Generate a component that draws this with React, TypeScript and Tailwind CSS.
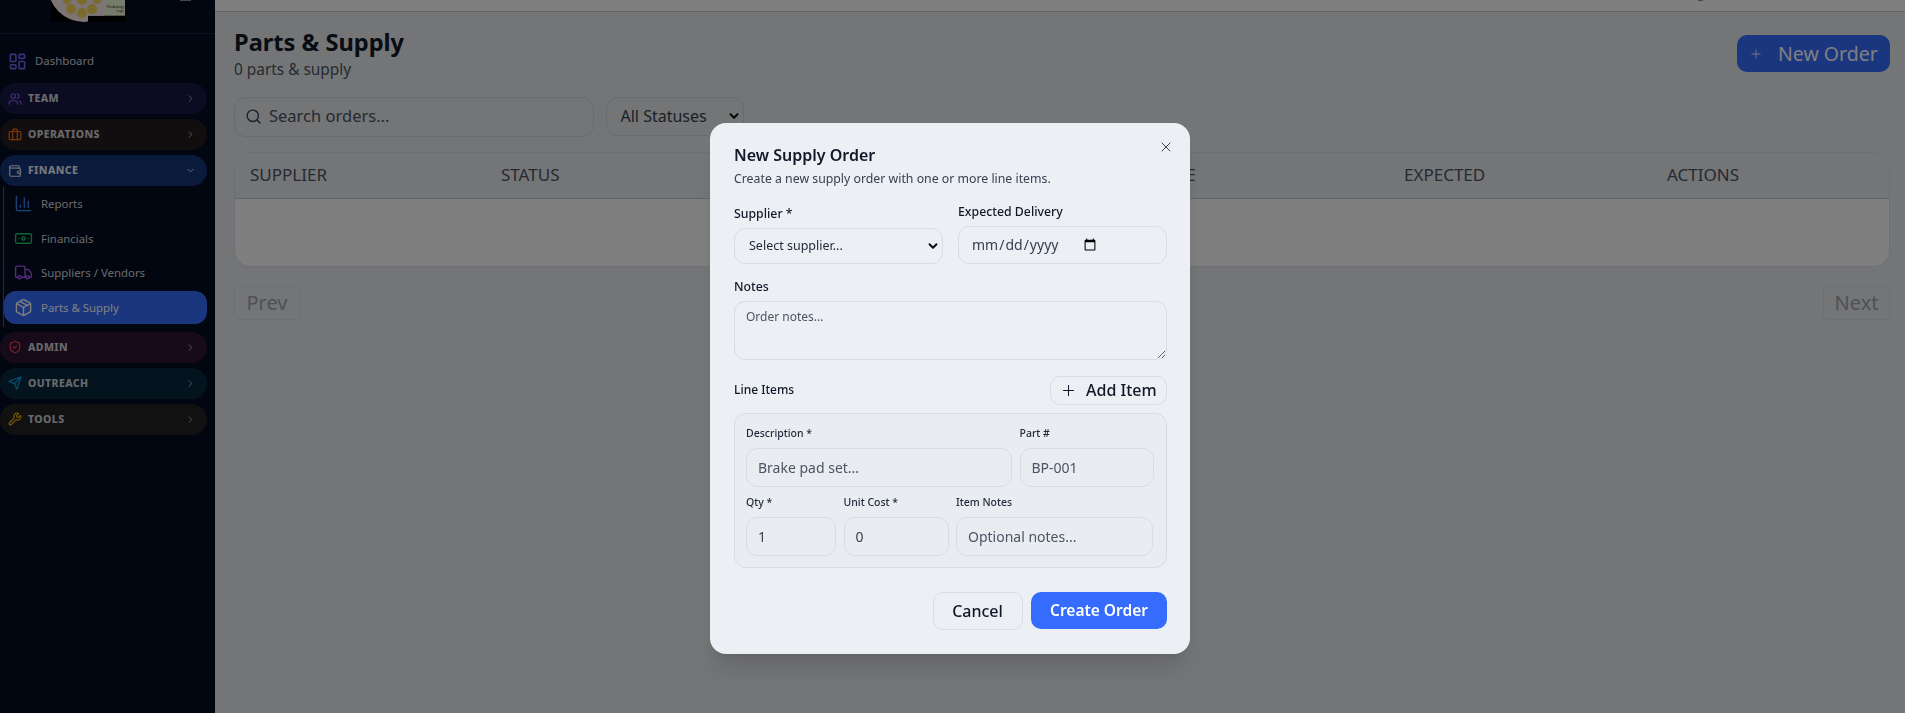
import {
  Banknote,
  Briefcase,
  ChartColumn,
  ChevronDown,
  ChevronRight,
  LayoutDashboard,
  Package,
  Plus,
  Search,
  Send,
  ShieldCheck,
  Truck,
  Users,
  Wallet,
  Wrench,
  X,
} from 'lucide-react'
import type { LucideIcon } from 'lucide-react'

const font = "font-['Noto_Sans',sans-serif]"

interface GroupProps {
  label: string
  icon: LucideIcon
  pill: string
  iconColor: string
  open?: boolean
}

function Group({ label, icon: Icon, pill, iconColor, open }: GroupProps) {
  return (
    <div className={`flex h-[31px] w-[207px] items-center rounded-full pl-[8px] pr-[11px] ${pill}`}>
      <Icon className={`h-[14px] w-[14px] shrink-0 ${iconColor}`} strokeWidth={2} />
      <span className={`ml-[6px] flex-1 text-[10.5px] font-extrabold tracking-[0.4px] ${open ? 'text-[#e8ecf3]' : 'text-[#cfd2d8]'}`}>
        {label}
      </span>
      {open ? (
        <ChevronDown className="h-[11px] w-[11px] text-[#d4d4d8]" />
      ) : (
        <ChevronRight className="h-[11px] w-[11px] text-[#b6b8bc]" />
      )}
    </div>
  )
}

function SubItem({ label, icon: Icon, iconColor, active }: { label: string; icon: LucideIcon; iconColor: string; active?: boolean }) {
  return (
    <div className={`flex h-[33px] w-[203px] items-center gap-[8px] rounded-[12px] pl-[10px] ${active ? 'bg-[#356cfe]' : ''}`}>
      <Icon className={`h-[19px] w-[19px] shrink-0 ${iconColor}`} strokeWidth={1.75} />
      <span className={`text-[11.4px] ${active ? 'text-white' : 'text-[#d4d4d8]'}`}>{label}</span>
    </div>
  )
}

function Logo() {
  return (
    <svg className="absolute left-[51px] top-0" width="74" height="22" viewBox="0 0 74 22">
      <rect width="74" height="22" fill="#000" />
      <circle cx="33" cy="-14" r="36" fill="#faeaeb" />
      <rect x="37" y="15.7" width="37" height="7" fill="#000" />
      <rect x="37" y="0" width="15" height="15.7" fill="#faeaeb" />
      <rect x="52" y="0" width="22" height="15.7" fill="#eef7dc" />
      <circle cx="20" cy="9" r="5" fill="#f4d458" />
      <circle cx="31" cy="13" r="5" fill="#f4d458" />
      <circle cx="41" cy="9" r="5" fill="#f4d458" />
      <circle cx="31" cy="0" r="5" fill="#f4d458" />
      <circle cx="16" cy="0" r="4" fill="#f4d458" />
      <circle cx="46" cy="0" r="4" fill="#f4d458" />
      <text x="73" y="8" textAnchor="end" fontSize="3" fill="#222">The Analogy</text>
      <text x="73" y="12" textAnchor="end" fontSize="3" fill="#222">Logic</text>
    </svg>
  )
}

function Sidebar() {
  return (
    <aside className="relative h-full w-[215px] shrink-0 bg-[#040c22]">
      <Logo />
      <div className="absolute left-[180px] top-0 h-[1px] w-[11px] bg-[#8a8f99]" />
      <div className="h-[34px] border-b border-[#16223a]" />
      <div className="mt-[15px] flex h-[24px] items-center pl-[8px]">
        <LayoutDashboard className="h-[19px] w-[19px] text-[#6a6cf5]" strokeWidth={2} />
        <span className="ml-[8px] text-[11.4px] text-[#d4d4d8]">Dashboard</span>
      </div>
      <div className="mt-[10px] flex flex-col gap-[5px]">
        <Group label="TEAM" icon={Users} pill="bg-[#161644]" iconColor="text-[#8b5cf6]" />
        <Group label="OPERATIONS" icon={Briefcase} pill="bg-[#241c1e]" iconColor="text-[#f97316]" />
        <Group label="FINANCE" icon={Wallet} pill="bg-[#14347a]" iconColor="text-[#e5e7eb]" open />
        <div className="-mt-[4px] ml-[3px] flex flex-col gap-[1.67px] border-l border-[#147460] pb-[3px]">
          <SubItem label="Reports" icon={ChartColumn} iconColor="text-[#3b82f6]" />
          <SubItem label="Financials" icon={Banknote} iconColor="text-[#22c55e]" />
          <SubItem label="Suppliers / Vendors" icon={Truck} iconColor="text-[#a855f7]" />
          <SubItem label="Parts & Supply" icon={Package} iconColor="text-white" active />
        </div>
        <Group label="ADMIN" icon={ShieldCheck} pill="bg-[#2e1433]" iconColor="text-[#f43f5e]" />
        <Group label="OUTREACH" icon={Send} pill="bg-[#06283e]" iconColor="text-[#0ea5e9]" />
        <Group label="TOOLS" icon={Wrench} pill="bg-[#222224]" iconColor="text-[#eab308]" />
      </div>
    </aside>
  )
}

// the two middle headers sit behind the modal in the picture, so they stay blank
const columns = ['SUPPLIER', 'STATUS', '', '', 'DATE', 'EXPECTED', 'ACTIONS']

function OrdersPage() {
  return (
    <main className="h-full flex-1 bg-[#e8eaed]">
      <div className="relative h-[12px] overflow-hidden border-b border-[#c4c8ce] bg-white">
        <div className="absolute left-[1480px] top-[-10px] h-[11px] w-[11px] rounded-full bg-[#777]" />
      </div>
      <div className="pl-[19px] pr-[15px]">
        <div className="mt-[12px] flex items-start justify-between">
          <div>
            <h1 className="text-[23.6px] font-bold leading-[36px] text-[#111827]">Parts &amp; Supply</h1>
            <p className="text-[15.4px] leading-[20px] text-[#4b5563]">0 parts &amp; supply</p>
          </div>
          <button className="mt-[11px] flex h-[37px] w-[153px] items-center gap-[15px] rounded-[10px] bg-[#356cfe] pl-[12px] text-[19.5px] text-white">
            <Plus className="h-[14px] w-[14px]" strokeWidth={1.5} />
            New Order
          </button>
        </div>
        <div className="mt-[17px] flex items-start gap-[11.5px]">
          <div className="flex h-[39.7px] w-[360px] items-center rounded-[12px] border border-[#d2d6dc] pl-[10px]">
            <Search className="h-[17px] w-[17px] text-[#374151]" strokeWidth={2} />
            <span className="ml-[7px] text-[16.5px] text-[#4b5563]">Search orders...</span>
          </div>
          <div className="relative">
            <select className="h-[38.5px] w-[138px] appearance-none rounded-[12px] border border-[#d2d6dc] pl-[14px] text-[16px] text-[#374151]">
              <option>All Statuses</option>
            </select>
            <ChevronDown className="absolute right-[3px] top-[12px] h-[14px] w-[14px] text-[#111]" strokeWidth={3.5} />
          </div>
        </div>
        <div className="mt-[15.3px] h-[115.4px] overflow-hidden rounded-[16px] border border-[#dcdfe4] bg-white">
          <div className="-ml-[1px] grid h-[46px] grid-cols-[251px_249px_208px_197px_249px_263px_1fr] items-center border-b border-[#c4c8ce] bg-[#e9ebee] pb-[2px] text-[17px] text-[#4b5563]">
            {columns.map((c, i) => (
              <span key={i} className="pl-[16px]">{c}</span>
            ))}
          </div>
        </div>
        <div className="mt-[18.5px] flex justify-between">
          <button className="h-[34px] w-[66px] rounded-[4px] border border-[#dcdfe4] text-[20px] text-[#9ca3af]">Prev</button>
          <button className="h-[34px] w-[67px] rounded-[4px] border border-[#dcdfe4] text-[20px] text-[#9ca3af]">Next</button>
        </div>
      </div>
    </main>
  )
}

function Label({ children, className = '' }: { children: React.ReactNode; className?: string }) {
  return <label className={`block text-[12.3px] font-medium leading-[18px] text-[#111827] ${className}`}>{children}</label>
}

function SmallLabel({ children }: { children: React.ReactNode }) {
  return <label className="block text-[10.5px] font-medium leading-[14px] text-[#1f2937]">{children}</label>
}

const field = 'w-full rounded-[11px] border border-[#d8dde5] bg-transparent px-[11px] text-[14px] text-[#374151] placeholder:text-[#4b5563] outline-none'

function OrderModal() {
  return (
    <div className="fixed inset-0 bg-black/50 pl-[710px] pt-[123px]">
      <div className="relative h-[531px] w-[480px] rounded-[16px] bg-[#ecEFF4] pl-[24px] pr-[23px] pt-[21px] shadow-xl">
        <button className="absolute right-[16px] top-[16px] text-[#374151]">
          <X className="h-[16px] w-[16px]" strokeWidth={1.5} />
        </button>
        <h2 className="text-[16px] font-semibold leading-[22px] text-[#111827]">New Supply Order</h2>
        <p className="mt-[5px] text-[12.3px] leading-[16px] text-[#374151]">Create a new supply order with one or more line items.</p>

        <div className="mt-[15.7px] grid grid-cols-[209px_209px] gap-[15px]">
          <div className="pt-[2px]">
            <Label>Supplier *</Label>
            <div className="relative mt-[5.7px]">
              <select className="h-[36px] w-full appearance-none rounded-[11px] border border-[#d8dde5] bg-transparent pl-[14px] text-[12.5px] text-[#1f2937]">
                <option>Select supplier...</option>
              </select>
              <ChevronDown className="absolute right-[3px] top-[11px] h-[14px] w-[14px] text-[#111]" strokeWidth={3.5} />
            </div>
          </div>
          <div>
            <Label>Expected Delivery</Label>
            <input
              type="date"
              className={`${field} mt-[5px] h-[38.5px] pl-[12px] [&::-webkit-datetime-edit]:flex-none [&::-webkit-calendar-picker-indicator]:ml-[2px]`}
            />
          </div>
        </div>

        <Label className="mt-[13.7px]">Notes</Label>
        <textarea
          placeholder="Order notes..."
          className="mt-[5px] block h-[58.6px] w-full rounded-[11px] border border-[#d8dde5] bg-transparent px-[11px] py-[6px] text-[12px] text-[#374151] placeholder:text-[#4b5563] outline-none"
        />

        <div className="mt-[16.4px] flex items-center justify-between">
          <span className="text-[12px] font-medium text-[#111827]">Line Items</span>
          <button className="flex h-[28.7px] w-[117px] items-center gap-[9px] rounded-[10px] border border-[#d8dde5] pl-[9px] text-[16px] font-medium text-[#111827]">
            <Plus className="h-[17px] w-[17px]" strokeWidth={1.5} />
            Add Item
          </button>
        </div>

        <div className="mt-[8.3px] h-[155px] rounded-[12px] border border-[#d8dde5] bg-[#e9ecf1] pl-[11px] pr-[12px] pt-[12.3px]">
          <div className="grid grid-cols-[266px_134px] gap-[7.5px]">
            <div>
              <SmallLabel>Description *</SmallLabel>
              <input placeholder="Brake pad set..." className={`${field} mt-[7.7px] h-[39px]`} />
            </div>
            <div>
              <SmallLabel>Part #</SmallLabel>
              <input placeholder="BP-001" className={`${field} mt-[7.7px] h-[39px]`} />
            </div>
          </div>
          <div className="mt-[8.3px] grid grid-cols-[90px_105px_197px] gap-[7.5px]">
            <div>
              <SmallLabel>Qty *</SmallLabel>
              <input defaultValue="1" className={`${field} mt-[8px] h-[39px]`} />
            </div>
            <div>
              <SmallLabel>Unit Cost *</SmallLabel>
              <input defaultValue="0" className={`${field} mt-[8px] h-[39px]`} />
            </div>
            <div>
              <SmallLabel>Item Notes</SmallLabel>
              <input placeholder="Optional notes..." className={`${field} mt-[8px] h-[39px]`} />
            </div>
          </div>
        </div>

        <div className="mt-[23.8px] flex items-start justify-end gap-[8.5px]">
          <button className="h-[38px] w-[90px] rounded-[10px] border border-[#d8dde5] text-[16px] font-medium text-[#111827]">Cancel</button>
          <button className="h-[37px] w-[136px] rounded-[10px] bg-[#356cfe] text-[15.5px] font-semibold text-white">Create Order</button>
        </div>
      </div>
    </div>
  )
}

export default function App() {
  return (
    <div className={`flex h-screen overflow-hidden ${font}`}>
      <Sidebar />
      <OrdersPage />
      <OrderModal />
    </div>
  )
}
